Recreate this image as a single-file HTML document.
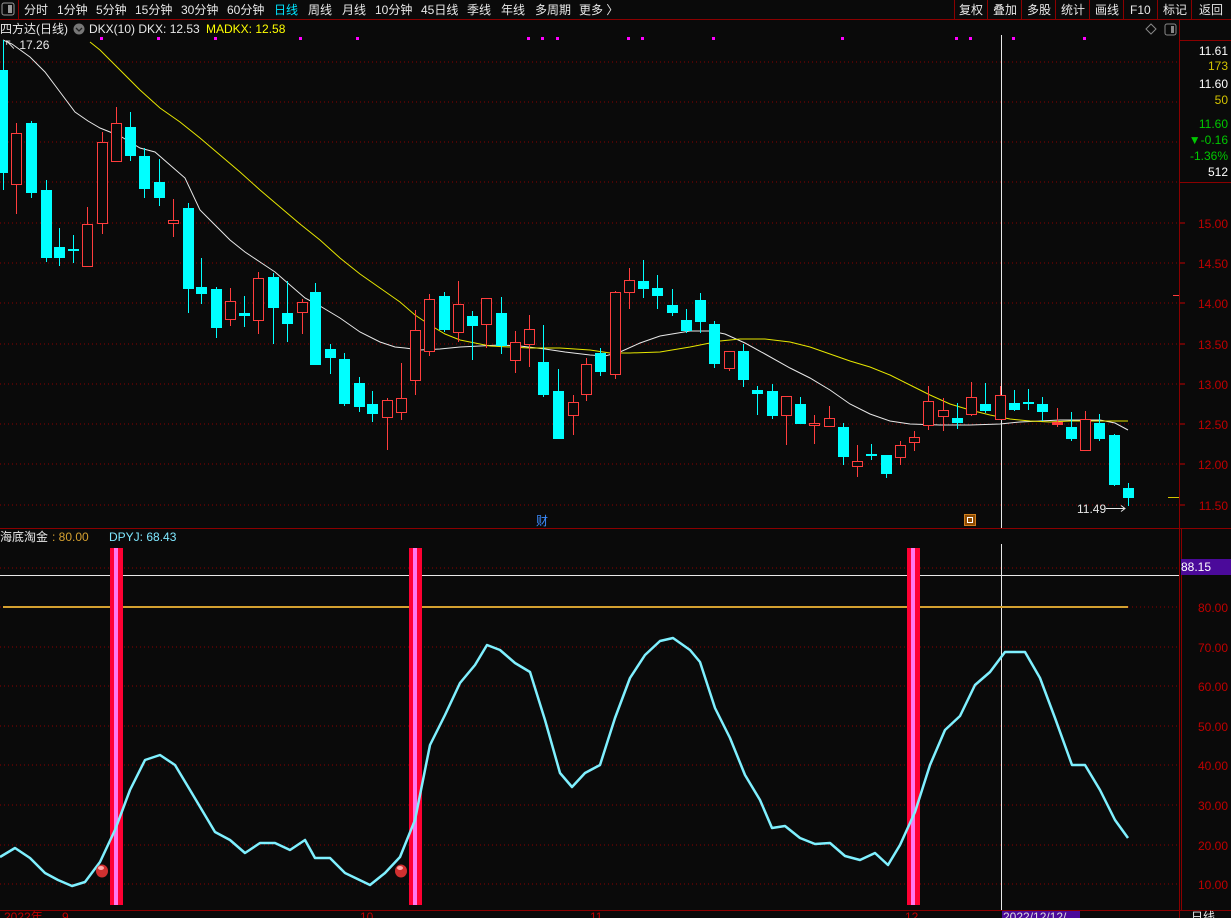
<!DOCTYPE html>
<html><head><meta charset="utf-8">
<style>
html,body{margin:0;padding:0;background:#0a0a0a;width:1231px;height:918px;overflow:hidden}
svg{display:block}
text{font-family:"Liberation Sans","Noto Sans CJK SC",sans-serif;font-size:12px}
</style></head><body>
<svg width="1231" height="918" viewBox="0 0 1231 918" xmlns="http://www.w3.org/2000/svg">
<rect width="1231" height="918" fill="#0a0a0a"/>
<!-- toolbar -->
<rect x="0" y="0" width="1231" height="19" fill="#0a0a0a"/>
<line x1="0" y1="19.5" x2="1231" y2="19.5" stroke="#8b0000"/>
<rect x="2" y="3" width="12" height="12" rx="2" fill="none" stroke="#999"/>
<rect x="8" y="5" width="4" height="8" fill="#999"/>
<line x1="18.5" y1="0" x2="18.5" y2="19" stroke="#8b0000"/>
<g fill="#e8e8e8">
<text x="24" y="14">分时</text><text x="57" y="14">1分钟</text><text x="96" y="14">5分钟</text>
<text x="135" y="14">15分钟</text><text x="181" y="14">30分钟</text><text x="227" y="14">60分钟</text>
<text x="274" y="14" fill="#00e5ff">日线</text><text x="308" y="14">周线</text><text x="342" y="14">月线</text>
<text x="375" y="14">10分钟</text><text x="421" y="14">45日线</text><text x="467" y="14">季线</text>
<text x="501" y="14">年线</text><text x="535" y="14">多周期</text><text x="579" y="14">更多 〉</text>
<text x="959" y="14">复权</text><text x="993" y="14">叠加</text><text x="1027" y="14">多股</text>
<text x="1061" y="14">统计</text><text x="1095" y="14">画线</text><text x="1130" y="14">F10</text>
<text x="1163" y="14">标记</text><text x="1199" y="14">返回</text>
</g>
<g stroke="#8b0000">
<line x1="954.5" y1="0" x2="954.5" y2="19"/><line x1="987.5" y1="0" x2="987.5" y2="19"/>
<line x1="1021.5" y1="0" x2="1021.5" y2="19"/><line x1="1055.5" y1="0" x2="1055.5" y2="19"/>
<line x1="1089.5" y1="0" x2="1089.5" y2="19"/><line x1="1123.5" y1="0" x2="1123.5" y2="19"/>
<line x1="1157.5" y1="0" x2="1157.5" y2="19"/><line x1="1191.5" y1="0" x2="1191.5" y2="19"/>
</g>
<!-- right axis frame -->
<line x1="1179.5" y1="19" x2="1179.5" y2="918" stroke="#8b0000"/>
<line x1="1179" y1="40.5" x2="1231" y2="40.5" stroke="#8b0000"/>
<line x1="1179" y1="182.5" x2="1231" y2="182.5" stroke="#8b0000"/>
<line x1="0" y1="528.5" x2="1231" y2="528.5" stroke="#8b0000"/>
<line x1="0" y1="910.5" x2="1231" y2="910.5" stroke="#8b0000"/>
<line x1="1181.5" y1="529" x2="1181.5" y2="910" stroke="#8b0000"/>
<!-- grid -->
<g stroke="#8b0000" stroke-dasharray="1,3">
<line x1="0" y1="62" x2="1179" y2="62"/><line x1="0" y1="102" x2="1179" y2="102"/>
<line x1="0" y1="142" x2="1179" y2="142"/><line x1="0" y1="182" x2="1179" y2="182"/>
<line x1="0" y1="223" x2="1179" y2="223"/><line x1="0" y1="263" x2="1179" y2="263"/>
<line x1="0" y1="303" x2="1179" y2="303"/><line x1="0" y1="344" x2="1179" y2="344"/>
<line x1="0" y1="384" x2="1179" y2="384"/><line x1="0" y1="424" x2="1179" y2="424"/>
<line x1="0" y1="464" x2="1179" y2="464"/><line x1="0" y1="505" x2="1179" y2="505"/>
<line x1="0" y1="568" x2="1179" y2="568"/><line x1="0" y1="607" x2="1179" y2="607"/>
<line x1="0" y1="647" x2="1179" y2="647"/><line x1="0" y1="686" x2="1179" y2="686"/>
<line x1="0" y1="726" x2="1179" y2="726"/><line x1="0" y1="765" x2="1179" y2="765"/>
<line x1="0" y1="805" x2="1179" y2="805"/><line x1="0" y1="845" x2="1179" y2="845"/>
<line x1="0" y1="884" x2="1179" y2="884"/>
</g>
<!-- header -->
<text x="0" y="33" fill="#e8e8e8">四方达(日线)</text>
<circle cx="79" cy="29" r="5.5" fill="#777"/><path d="M76 28 L79 31 L82 28" stroke="#222" fill="none" stroke-width="1.3"/>
<text x="89" y="33" fill="#e8e8e8">DKX(10)  DKX: 12.53</text>
<text x="206" y="33" fill="#ffff00">MADKX: 12.58</text>
<g fill="#ff00ff">
<rect x="100" y="37" width="3" height="3"/><rect x="157" y="37" width="3" height="3"/><rect x="214" y="37" width="3" height="3"/>
<rect x="299" y="37" width="3" height="3"/><rect x="356" y="37" width="3" height="3"/><rect x="527" y="37" width="3" height="3"/>
<rect x="541" y="37" width="3" height="3"/><rect x="556" y="37" width="3" height="3"/><rect x="627" y="37" width="3" height="3"/>
<rect x="641" y="37" width="3" height="3"/><rect x="712" y="37" width="3" height="3"/><rect x="841" y="37" width="3" height="3"/>
<rect x="955" y="37" width="3" height="3"/><rect x="969" y="37" width="3" height="3"/><rect x="1012" y="37" width="3" height="3"/>
<rect x="1083" y="37" width="3" height="3"/>
</g>
<path d="M1146 29 L1151 24 L1156 29 L1151 34Z" fill="none" stroke="#888"/>
<rect x="1165" y="24" width="11" height="11" rx="2" fill="none" stroke="#888"/><rect x="1171" y="26" width="3" height="7" fill="#888"/>
<!-- right info -->
<g text-anchor="end" font-size="12">
<text x="1228" y="55" fill="#fff">11.61</text>
<text x="1228" y="70" fill="#d4c400">173</text>
<text x="1228" y="88" fill="#fff">11.60</text>
<text x="1228" y="104" fill="#d4c400">50</text>
<text x="1228" y="128" fill="#00c800">11.60</text>
<text x="1228" y="144" fill="#00c800">▼-0.16</text>
<text x="1228" y="160" fill="#00c800">-1.36%</text>
<text x="1228" y="176" fill="#fff">512</text>
</g>
<g fill="#c00000" font-size="12" text-anchor="end">
<text x="1228" y="228">15.00</text><text x="1228" y="268">14.50</text><text x="1228" y="308">14.00</text>
<text x="1228" y="349">13.50</text><text x="1228" y="389">13.00</text><text x="1228" y="429">12.50</text>
<text x="1228" y="469">12.00</text><text x="1228" y="510">11.50</text>
<text x="1228" y="612">80.00</text><text x="1228" y="652">70.00</text><text x="1228" y="691">60.00</text>
<text x="1228" y="731">50.00</text><text x="1228" y="770">40.00</text><text x="1228" y="810">30.00</text>
<text x="1228" y="850">20.00</text><text x="1228" y="889">10.00</text>
</g>
<g stroke="#c00000"><line x1="1180" y1="223" x2="1185" y2="223"/><line x1="1180" y1="263" x2="1185" y2="263"/><line x1="1180" y1="303" x2="1185" y2="303"/><line x1="1180" y1="344" x2="1185" y2="344"/><line x1="1180" y1="384" x2="1185" y2="384"/><line x1="1180" y1="424" x2="1185" y2="424"/><line x1="1180" y1="464" x2="1185" y2="464"/><line x1="1180" y1="505" x2="1185" y2="505"/></g>
<line x1="1168" y1="497.5" x2="1179" y2="497.5" stroke="#d4c400"/>
<line x1="1173" y1="295.5" x2="1179" y2="295.5" stroke="#ff3d3d"/>

<!-- crosshair -->
<line x1="1001.5" y1="35" x2="1001.5" y2="528" stroke="#e8e8e8"/>
<line x1="1001.5" y1="544" x2="1001.5" y2="910" stroke="#e8e8e8"/>

<!-- moving averages -->
<polyline fill="none" stroke="#e8e8e8" stroke-width="1" points="3,40 12,44 30,57 45,72 60,92 75,112 88,121 100,128 120,136 140,148 155,152 170,165 185,178 200,210 215,225 230,240 245,252 260,262 275,272 290,285 305,298 320,306 340,318 360,332 380,342 395,347 405,348 420,350 440,349 460,347 480,346 500,345 520,346 545,349 565,352 590,355 605,356 620,352 640,343 660,336 690,331 710,331 725,334 745,343 765,354 790,368 810,378 830,390 850,404 870,414 890,421 910,424 940,425 970,425 1000,424 1020,422 1040,421 1060,420 1080,420 1100,420 1115,423 1128,430"/>
<polyline fill="none" stroke="#e6e600" stroke-width="1" points="90,42 100,50 120,70 140,90 160,108 180,122 200,138 220,155 240,172 260,190 280,207 300,224 320,240 340,258 360,274 380,288 400,302 415,315 430,325 445,334 460,340 475,343 490,346 510,347 530,348 560,348 590,350 610,353 630,353 660,352 690,347 720,341 740,339 765,339 790,342 810,347 830,354 850,361 870,367 890,375 910,385 930,395 950,404 970,410 990,415 1010,419 1030,421 1050,422 1070,421 1100,421 1128,421"/>

<!-- candles: cyan -->
<g stroke="#00ffff" stroke-width="1">
<line x1="3.5" y1="40" x2="3.5" y2="190"/><line x1="31.5" y1="121" x2="31.5" y2="198"/><line x1="46.5" y1="180" x2="46.5" y2="262"/>
<line x1="59.5" y1="228" x2="59.5" y2="266"/><line x1="73.5" y1="235" x2="73.5" y2="263"/><line x1="130.5" y1="112" x2="130.5" y2="161"/>
<line x1="144.5" y1="148" x2="144.5" y2="198"/><line x1="159.5" y1="159" x2="159.5" y2="206"/><line x1="188.5" y1="203" x2="188.5" y2="313"/>
<line x1="201.5" y1="258" x2="201.5" y2="304"/><line x1="216.5" y1="287" x2="216.5" y2="338"/><line x1="244.5" y1="296" x2="244.5" y2="327"/>
<line x1="273.5" y1="273" x2="273.5" y2="344"/><line x1="287.5" y1="281" x2="287.5" y2="342"/><line x1="315.5" y1="283" x2="315.5" y2="365"/>
<line x1="330.5" y1="344" x2="330.5" y2="374"/><line x1="344.5" y1="353" x2="344.5" y2="406"/><line x1="359.5" y1="377" x2="359.5" y2="412"/>
<line x1="372.5" y1="391" x2="372.5" y2="422"/><line x1="444.5" y1="292" x2="444.5" y2="332"/><line x1="472.5" y1="311" x2="472.5" y2="360"/>
<line x1="501.5" y1="297" x2="501.5" y2="354"/><line x1="543.5" y1="325" x2="543.5" y2="397"/><line x1="558.5" y1="369" x2="558.5" y2="439"/>
<line x1="600.5" y1="348" x2="600.5" y2="376"/><line x1="643.5" y1="260" x2="643.5" y2="298"/><line x1="657.5" y1="275" x2="657.5" y2="309"/>
<line x1="672.5" y1="289" x2="672.5" y2="316"/><line x1="686.5" y1="309" x2="686.5" y2="333"/><line x1="700.5" y1="293" x2="700.5" y2="333"/>
<line x1="714.5" y1="321" x2="714.5" y2="368"/><line x1="743.5" y1="344" x2="743.5" y2="387"/><line x1="757.5" y1="386" x2="757.5" y2="415"/>
<line x1="772.5" y1="384" x2="772.5" y2="419"/><line x1="800.5" y1="397" x2="800.5" y2="424"/><line x1="843.5" y1="423" x2="843.5" y2="465"/>
<line x1="871.5" y1="444" x2="871.5" y2="460"/><line x1="886.5" y1="455" x2="886.5" y2="478"/><line x1="957.5" y1="403" x2="957.5" y2="429"/>
<line x1="985.5" y1="383" x2="985.5" y2="413"/><line x1="1014.5" y1="390" x2="1014.5" y2="411"/><line x1="1028.5" y1="389" x2="1028.5" y2="410"/>
<line x1="1042.5" y1="397" x2="1042.5" y2="421"/><line x1="1071.5" y1="412" x2="1071.5" y2="441"/><line x1="1099.5" y1="414" x2="1099.5" y2="441"/>
<line x1="1114.5" y1="434" x2="1114.5" y2="486"/><line x1="1128.5" y1="483" x2="1128.5" y2="506"/>
</g>
<g fill="#00ffff">
<rect x="-2" y="70" width="10" height="103"/><rect x="26" y="123" width="11" height="70"/><rect x="41" y="190" width="11" height="68"/>
<rect x="54" y="247" width="11" height="11"/><rect x="68" y="249" width="11" height="2"/><rect x="125" y="127" width="11" height="29"/>
<rect x="139" y="156" width="11" height="33"/><rect x="154" y="182" width="11" height="16"/><rect x="183" y="208" width="11" height="81"/>
<rect x="196" y="287" width="11" height="7"/><rect x="211" y="289" width="11" height="39"/><rect x="239" y="313" width="11" height="3"/>
<rect x="268" y="277" width="11" height="31"/><rect x="282" y="313" width="11" height="11"/><rect x="310" y="292" width="11" height="73"/>
<rect x="325" y="349" width="11" height="9"/><rect x="339" y="359" width="11" height="45"/><rect x="354" y="383" width="11" height="24"/>
<rect x="367" y="404" width="11" height="10"/><rect x="439" y="296" width="11" height="34"/><rect x="467" y="316" width="11" height="10"/>
<rect x="496" y="313" width="11" height="33"/><rect x="538" y="362" width="11" height="33"/><rect x="553" y="391" width="11" height="48"/>
<rect x="595" y="353" width="11" height="19"/><rect x="638" y="281" width="11" height="8"/><rect x="652" y="288" width="11" height="8"/>
<rect x="667" y="305" width="11" height="8"/><rect x="681" y="320" width="11" height="11"/><rect x="695" y="300" width="11" height="22"/>
<rect x="709" y="324" width="11" height="40"/><rect x="738" y="351" width="11" height="29"/><rect x="752" y="390" width="11" height="4"/>
<rect x="767" y="391" width="11" height="25"/><rect x="795" y="404" width="11" height="20"/><rect x="838" y="427" width="11" height="30"/>
<rect x="866" y="454" width="11" height="2"/><rect x="881" y="455" width="11" height="19"/><rect x="952" y="418" width="11" height="5"/>
<rect x="980" y="404" width="11" height="7"/><rect x="1009" y="403" width="11" height="7"/><rect x="1023" y="402" width="11" height="2"/>
<rect x="1037" y="404" width="11" height="8"/><rect x="1066" y="427" width="11" height="12"/><rect x="1094" y="423" width="11" height="16"/>
<rect x="1109" y="435" width="11" height="50"/><rect x="1123" y="488" width="11" height="10"/>
</g>
<!-- candles: red -->
<g stroke="#ff3d3d" stroke-width="1">
<line x1="16.5" y1="123" x2="16.5" y2="214"/><line x1="87.5" y1="207" x2="87.5" y2="266"/><line x1="102.5" y1="132" x2="102.5" y2="234"/>
<line x1="116.5" y1="107" x2="116.5" y2="161"/><line x1="173.5" y1="199" x2="173.5" y2="237"/><line x1="230.5" y1="288" x2="230.5" y2="326"/>
<line x1="258.5" y1="272" x2="258.5" y2="334"/><line x1="302.5" y1="299" x2="302.5" y2="334"/><line x1="387.5" y1="398" x2="387.5" y2="450"/>
<line x1="401.5" y1="363" x2="401.5" y2="420"/><line x1="415.5" y1="310" x2="415.5" y2="395"/><line x1="429.5" y1="294" x2="429.5" y2="356"/>
<line x1="458.5" y1="281" x2="458.5" y2="342"/><line x1="486.5" y1="298" x2="486.5" y2="348"/><line x1="515.5" y1="331" x2="515.5" y2="373"/>
<line x1="529.5" y1="315" x2="529.5" y2="367"/><line x1="573.5" y1="395" x2="573.5" y2="435"/><line x1="586.5" y1="358" x2="586.5" y2="401"/>
<line x1="615.5" y1="291" x2="615.5" y2="379"/><line x1="629.5" y1="268" x2="629.5" y2="309"/><line x1="729.5" y1="351" x2="729.5" y2="371"/>
<line x1="786.5" y1="396" x2="786.5" y2="445"/><line x1="814.5" y1="415" x2="814.5" y2="444"/><line x1="829.5" y1="406" x2="829.5" y2="427"/>
<line x1="857.5" y1="445" x2="857.5" y2="477"/><line x1="900.5" y1="441" x2="900.5" y2="465"/><line x1="914.5" y1="431" x2="914.5" y2="451"/>
<line x1="928.5" y1="386" x2="928.5" y2="430"/><line x1="943.5" y1="398" x2="943.5" y2="431"/><line x1="971.5" y1="382" x2="971.5" y2="416"/>
<line x1="1000.5" y1="386" x2="1000.5" y2="420"/><line x1="1057.5" y1="408" x2="1057.5" y2="427"/><line x1="1085.5" y1="411" x2="1085.5" y2="450"/>
</g>
<g fill="#0a0a0a" stroke="#ff3d3d" stroke-width="1">
<rect x="11.5" y="133.5" width="10" height="51"/><rect x="82.5" y="224.5" width="10" height="42"/><rect x="97.5" y="142.5" width="10" height="81"/>
<rect x="111.5" y="123.5" width="10" height="38"/><rect x="168.5" y="220.5" width="10" height="3"/><rect x="225.5" y="301.5" width="10" height="18"/>
<rect x="253.5" y="278.5" width="10" height="42"/><rect x="297.5" y="302.5" width="10" height="10"/><rect x="382.5" y="400.5" width="10" height="17"/>
<rect x="396.5" y="398.5" width="10" height="14"/><rect x="410.5" y="330.5" width="10" height="50"/><rect x="424.5" y="299.5" width="10" height="52"/>
<rect x="453.5" y="304.5" width="10" height="28"/><rect x="481.5" y="298.5" width="10" height="26"/><rect x="510.5" y="342.5" width="10" height="18"/>
<rect x="524.5" y="329.5" width="10" height="15"/><rect x="568.5" y="402.5" width="10" height="13"/><rect x="581.5" y="364.5" width="10" height="30"/>
<rect x="610.5" y="292.5" width="10" height="82"/><rect x="624.5" y="280.5" width="10" height="12"/><rect x="724.5" y="351.5" width="10" height="17"/>
<rect x="781.5" y="396.5" width="10" height="19"/><rect x="809.5" y="423.5" width="10" height="2"/><rect x="824.5" y="418.5" width="10" height="8"/>
<rect x="852.5" y="461.5" width="10" height="5"/><rect x="895.5" y="445.5" width="10" height="12"/><rect x="909.5" y="437.5" width="10" height="5"/>
<rect x="923.5" y="401.5" width="10" height="24"/><rect x="938.5" y="410.5" width="10" height="6"/><rect x="966.5" y="397.5" width="10" height="17"/>
<rect x="995.5" y="395.5" width="10" height="24"/><rect x="1052.5" y="422.5" width="10" height="2" fill="#ff3d3d"/><rect x="1080.5" y="419.5" width="10" height="31"/>
</g>
<!-- labels in main chart -->
<text x="4" y="49" fill="#e8e8e8">↖ 17.26</text>
<text x="1077" y="513" fill="#e8e8e8">11.49</text>
<line x1="1106" y1="508.5" x2="1125" y2="508.5" stroke="#e8e8e8"/><path d="M1121 505.5 L1125 508.5 L1121 511.5" fill="none" stroke="#e8e8e8"/>
<text x="536" y="525" fill="#3b8cff" font-size="11">财</text>
<rect x="964.5" y="514.5" width="11" height="11" fill="#8b4a00" stroke="#d08020"/><rect x="967.5" y="517.5" width="5" height="5" fill="none" stroke="#fff"/>

<!-- indicator -->
<text x="0" y="541" fill="#e8e8e8">海底淘金</text>
<text x="52" y="541" fill="#d4a030">: 80.00</text>
<text x="109" y="541" fill="#7fe8ff">DPYJ: 68.43</text>
<line x1="0" y1="575.5" x2="1179" y2="575.5" stroke="#e8e8e8"/>
<line x1="3" y1="607" x2="1128" y2="607" stroke="#d4a030" stroke-width="2"/>
<rect x="1181" y="559" width="50" height="16" fill="#4b0a9a"/>
<text x="1181" y="571" fill="#fff">88.15</text>
<g>
<rect x="110" y="548" width="13" height="357" fill="#ff0033"/><rect x="114" y="548" width="4" height="357" fill="#ff77ee"/>
<rect x="409" y="548" width="13" height="357" fill="#ff0033"/><rect x="413" y="548" width="4" height="357" fill="#ff77ee"/>
<rect x="907" y="548" width="13" height="357" fill="#ff0033"/><rect x="911" y="548" width="4" height="357" fill="#ff77ee"/>
</g>
<polyline fill="none" stroke="#7ff0ff" stroke-width="2.5" stroke-linejoin="round" points="0,857 15,848 30,858 45,873 58,880 72,886 85,882 100,862 115,830 130,790 145,760 160,755 175,765 190,790 215,832 230,840 245,853 260,843 275,843 290,850 305,840 315,858 330,858 345,873 370,885 385,873 400,857 415,820 430,745 445,715 460,683 475,665 487,645 500,650 515,663 530,672 545,720 560,773 572,787 585,773 600,765 615,718 630,678 645,655 660,641 673,638 690,650 700,662 715,708 730,738 745,775 760,800 772,828 785,826 800,838 815,844 830,843 845,856 860,860 875,853 888,865 900,845 915,812 930,765 945,730 960,716 975,685 990,672 1005,652 1025,652 1040,678 1055,718 1072,765 1085,765 1100,790 1115,820 1128,838"/>
<ellipse cx="102" cy="871" rx="6" ry="6.5" fill="#d03030"/><ellipse cx="101" cy="868" rx="3" ry="2" fill="#ffaaaa"/>
<ellipse cx="401" cy="871" rx="6" ry="6.5" fill="#d03030"/><ellipse cx="400" cy="868" rx="3" ry="2" fill="#ffaaaa"/>

<!-- bottom axis -->
<g fill="#c00000" font-size="11">
<text x="4" y="921">2022年</text><text x="62" y="921">9</text><text x="360" y="921">10</text><text x="590" y="921">11</text><text x="905" y="921">12</text>
</g>
<rect x="1002" y="911" width="78" height="7" fill="#4b0a9a"/>
<text x="1003" y="921" fill="#ddd" font-size="11">2022/12/12/</text>
<text x="1191" y="921" fill="#e8e8e8" font-size="11">日线</text>
</svg>
</body></html>
